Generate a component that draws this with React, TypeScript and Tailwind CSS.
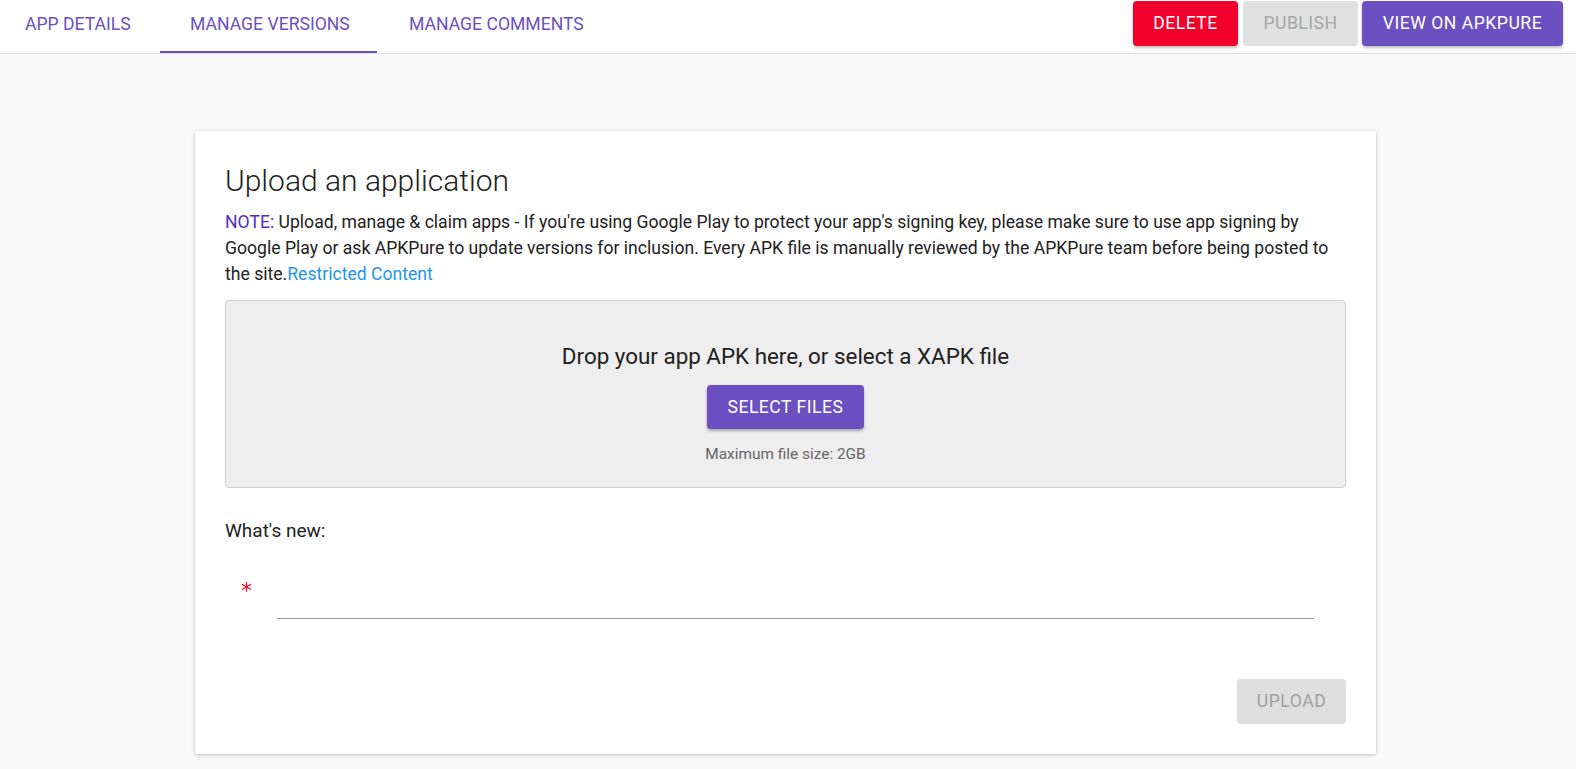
import React, { useState } from "react";

const tabs = [
  { label: "App Details", pad: "w-[160px] pl-[25px]" },
  { label: "Manage Versions", pad: "w-[217px] pl-[30px]" },
  { label: "Manage Comments", pad: "pl-[32px] pr-[28px]" },
];

const App: React.FC = () => {
  const [activeTab, setActiveTab] = useState(1);
  const [whatsNew, setWhatsNew] = useState("");

  return (
    <div className="min-h-screen bg-[#fafafa] font-['Roboto',sans-serif] text-[#212121]">
      <header className="flex h-[54px] items-start justify-between border-b border-[#e0e0e0] bg-white">
        <nav className="flex h-[53px]">
          {tabs.map((tab, i) => (
            <button
              key={tab.label}
              onClick={() => setActiveTab(i)}
              className={`relative flex h-full items-center pb-[4px] text-[17.6px] uppercase text-[#6a50c0] ${tab.pad}`}
            >
              {tab.label}
              {activeTab === i && (
                <span className="absolute bottom-0 left-0 right-0 h-[2px] bg-[#6a50c0]" />
              )}
            </button>
          ))}
        </nav>
        <div className="mt-[1px] mr-[13px] flex">
          <button className="h-[45px] w-[105px] rounded-[4px] bg-[#f0002a] text-[17.6px] uppercase tracking-[0.5px] text-white shadow-[0_2px_3px_rgba(0,0,0,0.25)]">
            Delete
          </button>
          <button
            disabled
            className="ml-[5px] h-[45px] w-[115px] rounded-[4px] bg-[#e0e0e0] text-[17.6px] uppercase tracking-[0.5px] text-[#a6a6a6]"
          >
            Publish
          </button>
          <button className="ml-[4px] h-[45px] w-[201px] rounded-[4px] bg-[#6a50c0] text-[17.6px] uppercase tracking-[0.5px] text-white shadow-[0_2px_3px_rgba(0,0,0,0.25)]">
            View on APKPure
          </button>
        </div>
      </header>

      <main className="pt-[77px] pb-[20px]">
        <div className="ml-[195px] w-[1181px] rounded-[2px] bg-white px-[30px] pt-[32px] pb-[30px] shadow-[0_1px_4px_rgba(0,0,0,0.25)]">
          <h1 className="text-[30px] leading-[36px] font-light text-[#212121]">
            Upload an application
          </h1>
          <p className="mt-[10px] text-[17.6px] leading-[26px] text-[#212121]">
            <span className="text-[#512dc8]">NOTE:</span> Upload, manage &amp;
            claim apps - If you're using Google Play to protect your app's
            signing key, please make sure to use app signing by Google Play or
            ask APKPure to update versions for inclusion. Every APK file is
            manually reviewed by the APKPure team before being posted to the
            site.
            <a href="#" className="text-[#1e96f0]">
              Restricted Content
            </a>
          </p>

          <div className="mt-[13px] flex h-[188px] flex-col items-center rounded-[4px] border border-[#cfcfcf] bg-[#eeeeee] pt-[40px]">
            <p className="text-[22.4px] leading-[30px] text-[#212121]">
              Drop your app APK here, or select a XAPK file
            </p>
            <button className="mt-[14px] h-[44px] w-[157px] rounded-[4px] bg-[#6a50c0] text-[17.6px] uppercase tracking-[0.5px] text-white shadow-[0_2px_3px_rgba(0,0,0,0.3)]">
              Select Files
            </button>
            <p className="mt-[15px] text-[15.4px] leading-[20px] text-[#666666]">
              Maximum file size: 2GB
            </p>
          </div>

          <p className="mt-[30px] text-[19px] leading-[26px] text-[#212121]">
            What's new:
          </p>

          <div className="mt-[26px] flex items-start">
            <span className="mt-[10px] w-[52px] pl-[16px] font-['DejaVu_Sans',sans-serif] text-[22px] leading-[22px] text-[#f0002a]">
              *
            </span>
            <input
              value={whatsNew}
              onChange={(e) => setWhatsNew(e.target.value)}
              className="mr-[32px] h-[49px] flex-1 border-b border-[#9a9a9a] bg-transparent text-[17.6px] outline-none"
            />
          </div>

          <div className="mt-[60px] flex justify-end">
            <button
              disabled
              className="h-[45px] w-[109px] rounded-[4px] bg-[#dedede] text-[17.6px] uppercase tracking-[0.5px] text-[#a0a0a0]"
            >
              Upload
            </button>
          </div>
        </div>
      </main>
    </div>
  );
};

export default App;
